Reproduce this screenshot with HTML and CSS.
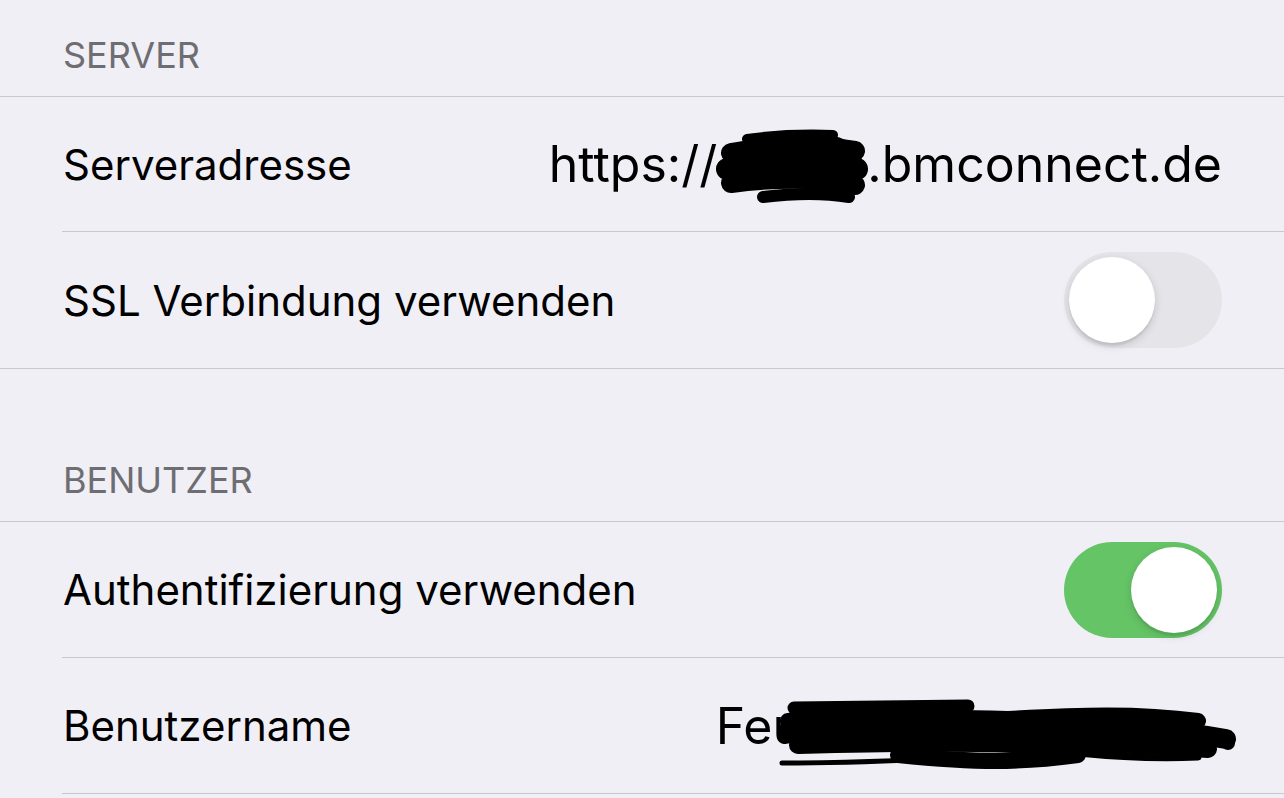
FILE: index.html
```html
<!DOCTYPE html>
<html>
<head>
  <meta charset="utf-8">
  <title>Einstellungen</title>
  <link rel="stylesheet" href="styles.css">
</head>
<body>
  <div id="einstellungen">
    <div class="gruppe-titel">Server</div>
    <div class="gruppe gruppe-ende">
      <div class="zeile">
        <span class="label">Serveradresse</span>
        <span class="wert">https://<span class="geschwaerzt server-schwarz"><svg width="160" height="80" viewBox="0 0 160 80"><g fill="none" stroke="#000" stroke-linecap="round" stroke-linejoin="round"><path d="M32 12 C60 8 90 7 118 8" stroke-width="10"/><path d="M16 26 C50 20 100 18 140 24" stroke-width="20"/><path d="M12 42 C50 36 110 34 142 42" stroke-width="22"/><path d="M16 56 C60 50 110 50 140 58" stroke-width="20"/><path d="M48 70 C80 66 110 66 134 70" stroke-width="12"/><path d="M100 14 C124 14 136 22 140 34" stroke-width="14"/></g></svg></span>.bmconnect.de</span>
      </div>
      <div class="zeile">
        <span class="label">SSL Verbindung verwenden</span>
        <span class="schalter"></span>
      </div>
    </div>

    <div class="gruppe-titel">Benutzer</div>
    <div class="gruppe">
      <div class="zeile">
        <span class="label">Authentifizierung verwenden</span>
        <span class="schalter an"></span>
      </div>
      <div class="zeile">
        <span class="label">Benutzername</span>
        <span class="wert">Feu<span class="geschwaerzt name-schwarz"><svg width="470" height="84" viewBox="0 0 470 84"><g fill="none" stroke="#000" stroke-linecap="round" stroke-linejoin="round"><path d="M16 15 L190 13" stroke-width="13"/><path d="M10 28 C80 22 160 24 230 26 C300 22 360 20 420 28" stroke-width="16"/><path d="M8 40 C100 34 200 32 280 36 C340 34 390 36 448 46" stroke-width="20"/><path d="M20 52 C100 50 180 48 260 52 C330 50 380 52 430 56" stroke-width="18"/><path d="M120 62 C200 70 240 70 300 62" stroke-width="16"/><path d="M4 70 C60 70 120 68 200 64" stroke-width="5"/><path d="M300 60 C340 64 380 66 420 64" stroke-width="7"/><path d="M450 50 L450 50" stroke-width="14"/></g></svg></span></span>
      </div>
    </div>
  </div>
</body>
</html>
```

FILE: styles.css
```css
* {
  box-sizing: border-box;
}

body {
  margin: 0;
  background-color: #f0eff5;
  font-family: Inter, "Noto Sans", sans-serif;
  color: #000;
}

.gruppe-titel {
  display: flex;
  align-items: flex-end;
  height: 97px;
  padding: 0 0 23px 63px;
  font-size: 36px;
  line-height: 36px;
  text-transform: uppercase;
  color: #6d6d72;
  border-bottom: 1px solid #c8c7cc;
}
.gruppe + .gruppe-titel {
  height: 153px;
}

.gruppe-ende {
  border-bottom: 1px solid #c8c7cc;
}

.zeile {
  display: flex;
  align-items: center;
  justify-content: space-between;
  height: 136px;
  margin-left: 62px;
  padding: 0 62px 0 1px;
  border-bottom: 1px solid #c8c7cc;
}
.gruppe-ende .zeile:first-child {
  height: 135px;
}
.gruppe-ende .zeile:last-child {
  border-bottom: none;
}

.label {
  font-size: 42px;
}

.wert {
  font-size: 50px;
  white-space: nowrap;
}

.geschwaerzt {
  display: inline-block;
  position: relative;
  height: 1px;
}
.geschwaerzt svg {
  position: absolute;
}
.server-schwarz {
  width: 150px;
}
.server-schwarz svg {
  left: -2px;
  top: -54px;
}
.name-schwarz {
  width: 420px;
}
.name-schwarz svg {
  left: -24px;
  top: -50px;
}

.schalter {
  position: relative;
  flex: none;
  width: 158px;
  height: 96px;
  border-radius: 48px;
  background-color: #e4e4e9;
}
.schalter::after {
  content: "";
  position: absolute;
  top: 5px;
  left: 5px;
  width: 86px;
  height: 86px;
  border-radius: 50%;
  background-color: #fff;
  box-shadow: 0 3px 8px rgba(0, 0, 0, .15), 0 3px 1px rgba(0, 0, 0, .06);
}
.schalter.an {
  background-color: #65c466;
}
.schalter.an::after {
  left: auto;
  right: 5px;
}
```
